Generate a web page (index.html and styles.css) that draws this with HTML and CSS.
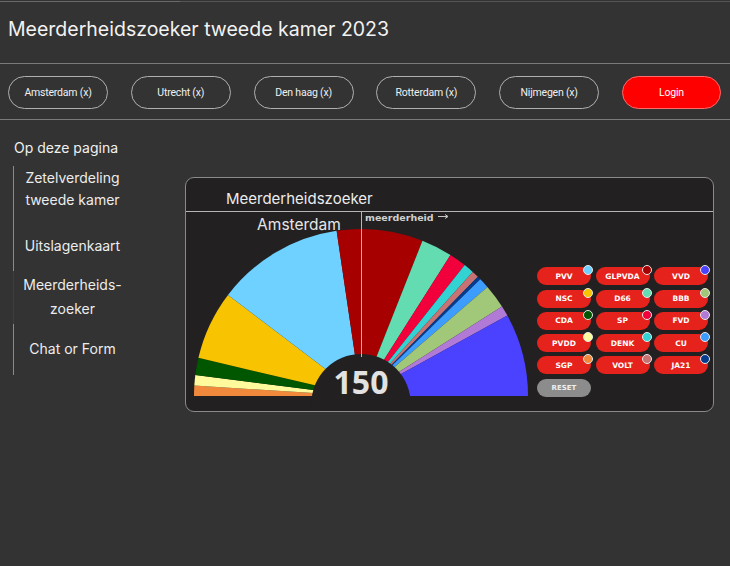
FILE: index.html
```html
<!DOCTYPE html>
<html lang="nl">
<head>
<meta charset="utf-8">
<title>Meerderheidszoeker tweede kamer 2023</title>
<link rel="stylesheet" href="styles.css">
</head>
<body>
<div class="topline"></div>
<header class="site-header">
  <h1 class="site-title">Meerderheidszoeker tweede kamer 2023</h1>
</header>
<nav class="city-bar">
  <button class="pill">Amsterdam (x)</button>
  <button class="pill">Utrecht (x)</button>
  <button class="pill">Den haag (x)</button>
  <button class="pill">Rotterdam (x)</button>
  <button class="pill">Nijmegen (x)</button>
  <button class="pill pill-login">Login</button>
</nav>
<main class="content">
  <aside class="sidebar">
    <div class="toc-title">Op deze pagina</div>
    <ul class="toc">
      <li class="toc-item toc-1">Zetelverdeling<br>tweede kamer</li>
      <li class="toc-item toc-2">Uitslagenkaart</li>
      <li class="toc-item toc-3 active">Meerderheids-<br>zoeker</li>
      <li class="toc-item toc-4">Chat or Form</li>
    </ul>
  </aside>
  <section class="card">
    <div class="card-head">Meerderheidszoeker</div>
    <div class="card-body">
      <svg class="chart" width="345" height="199" viewBox="0 0 345 199">
        <path d="M175 184 L8 184 A167 167 0 0 1 8.33 173.51 Z" fill="#f0893b"/>
        <path d="M175 184 L8.33 173.51 A167 167 0 0 1 9.32 163.07 Z" fill="#fffb9d"/>
        <path d="M175 184 L9.32 163.07 A167 167 0 0 1 12.41 145.87 Z" fill="#005700"/>
        <path d="M175 184 L12.41 145.87 A167 167 0 0 1 41.98 83.03 Z" fill="#f8c300"/>
        <path d="M175 184 L41.98 83.03 A167 167 0 0 1 150.60 18.79 Z" fill="#6ed1ff"/>
        <path d="M175 184 L150.60 18.79 A167 167 0 0 1 236.48 28.73 Z" fill="#a70000"/>
        <path d="M175 184 L236.48 28.73 A167 167 0 0 1 264.48 43.00 Z" fill="#64dcb1"/>
        <path d="M175 184 L264.48 43.00 A167 167 0 0 1 278.73 53.12 Z" fill="#f1003b"/>
        <path d="M175 184 L278.73 53.12 A167 167 0 0 1 286.74 59.90 Z" fill="#34d3d3"/>
        <path d="M175 184 L286.74 59.90 A167 167 0 0 1 291.84 64.68 Z" fill="#c87373"/>
        <path d="M175 184 L291.84 64.68 A167 167 0 0 1 294.32 67.16 Z" fill="#053c8e"/>
        <path d="M175 184 L294.32 67.16 A167 167 0 0 1 301.42 74.88 Z" fill="#3c9dff"/>
        <path d="M175 184 L301.42 74.88 A167 167 0 0 1 316.00 94.52 Z" fill="#a1c878"/>
        <path d="M175 184 L316.00 94.52 A167 167 0 0 1 321.34 103.55 Z" fill="#b07ad6"/>
        <path d="M175 184 L321.34 103.55 A167 167 0 0 1 342 184 Z" fill="#4b42ff"/>
        <circle cx="175" cy="191.6" r="49.6" fill="#222021"/>
        <line x1="175.5" y1="0" x2="175.5" y2="145" stroke="#b8b8b8" stroke-width="1"/>
        <text class="chart-city" x="113" y="18" text-anchor="middle">Amsterdam</text>
        <text class="chart-maj" x="179" y="8.5">meerderheid</text>
        <line x1="252" y1="4.5" x2="261.5" y2="4.5" stroke="#c8c8c8" stroke-width="1"/>
        <path d="M259 2.5 L262 4.5 L259 6.5" fill="none" stroke="#c8c8c8" stroke-width="1"/>
        <text class="chart-total" x="175" y="182" text-anchor="middle">150</text>
      </svg>
      <div class="legend">
        <button class="party">PVV<span class="dot" style="background:#6ed1ff"></span></button>
        <button class="party">GLPVDA<span class="dot" style="background:#a70000"></span></button>
        <button class="party">VVD<span class="dot" style="background:#4b42ff"></span></button>
        <button class="party">NSC<span class="dot" style="background:#f8c300"></span></button>
        <button class="party">D66<span class="dot" style="background:#64dcb1"></span></button>
        <button class="party">BBB<span class="dot" style="background:#a1c878"></span></button>
        <button class="party">CDA<span class="dot" style="background:#005700"></span></button>
        <button class="party">SP<span class="dot" style="background:#f1003b"></span></button>
        <button class="party">FVD<span class="dot" style="background:#b07ad6"></span></button>
        <button class="party">PVDD<span class="dot" style="background:#fffb9d"></span></button>
        <button class="party">DENK<span class="dot" style="background:#34d3d3"></span></button>
        <button class="party">CU<span class="dot" style="background:#3c9dff"></span></button>
        <button class="party">SGP<span class="dot" style="background:#f0893b"></span></button>
        <button class="party">VOLT<span class="dot" style="background:#c87373"></span></button>
        <button class="party">JA21<span class="dot" style="background:#053c8e"></span></button>
        <button class="reset">RESET</button>
      </div>
    </div>
  </section>
</main>
</body>
</html>
```
FILE: styles.css
```css
* { box-sizing: border-box; }
html, body { margin: 0; padding: 0; }
body {
  background: #333333;
  color: #eeeeee;
  font-family: Inter, "Noto Sans", sans-serif;
  width: 730px;
  height: 566px;
  overflow: hidden;
}
.topline {
  margin-top: 1px;
  height: 1px;
  background: linear-gradient(to right, #6a6a6a 0, #6a6a6a 180px, #555555 180px);
}
.site-header {
  height: 62px;
  border-bottom: 1px solid #7a7a7a;
  padding-left: 8px;
}
.site-title {
  margin: 0;
  font-weight: 400;
  font-size: 19.5px;
  line-height: 54px;
  color: #f2f2f2;
}
.city-bar {
  display: flex;
  justify-content: space-between;
  padding: 12px 9px 10px 8px;
  border-bottom: 1px solid #7a7a7a;
}
.pill {
  width: 100px;
  height: 33px;
  border-radius: 17px;
  border: 1px solid #b0b0b0;
  background: transparent;
  color: #f0f0f0;
  font-family: Roboto, sans-serif;
  font-size: 10.5px;
  letter-spacing: -0.2px;
  padding: 0;
}
.pill-login {
  width: 99px;
  background: #ff0000;
  border-color: #ff6a6a;
  color: #ffffff;
}
.content {
  display: flex;
}
.sidebar {
  width: 185px;
  flex: none;
}
.toc-title {
  margin: 18px 0 0 14px;
  font-size: 14px;
  line-height: 20px;
  color: #f0f0f0;
}
.toc {
  list-style: none;
  margin: 8px 0 0 13px;
  padding: 0 0 15px 0;
  width: 118px;
  border-left: 1px solid #8a8a8a;
}
.toc-item {
  text-align: center;
  font-size: 14px;
  line-height: 22px;
  color: #ececec;
}
.toc-1 { padding-top: 1px; }
.toc-2 { margin-top: 24px; }
.toc-3 { margin-top: 14px; }
.toc-4 { margin-top: 14px; }
.toc-item.active {
  margin-left: -1px;
  border-left: 1px solid #8e1c1c;
  padding: 2px 0 3px 0;
  line-height: 24px;
}
.card {
  margin-top: 57px;
  width: 529px;
  height: 235px;
  border: 1px solid #8a8a8a;
  border-radius: 9px;
  background: #222021;
  overflow: hidden;
}
.card-head {
  height: 34px;
  border-bottom: 1px solid #b4b4b4;
  padding: 11px 0 0 40px;
  font-size: 15px;
  line-height: 20px;
  color: #ececec;
}
.card-body {
  display: flex;
  height: 199px;
}
.chart {
  display: block;
  flex: none;
}
.chart-city {
  font-family: Inter, sans-serif;
  font-size: 15.5px;
  fill: #e6e6e6;
}
.chart-maj {
  font-family: "DejaVu Sans", sans-serif;
  font-weight: 700;
  font-size: 9.5px;
  fill: #cfcfcf;
}
.chart-total {
  font-family: "Open Sans", sans-serif;
  font-weight: 700;
  font-size: 32px;
  fill: #e2e2e2;
}
.legend {
  display: grid;
  grid-template-columns: repeat(3, 54px);
  grid-auto-rows: 18px;
  column-gap: 4.5px;
  row-gap: 4.3px;
  padding: 55.3px 0 0 6px;
  align-content: start;
}
.party, .reset {
  position: relative;
  height: 18px;
  border: none;
  border-radius: 9px;
  padding: 0;
  font-family: "DejaVu Sans", sans-serif;
  font-weight: 700;
  font-size: 7.5px;
  color: #ffffff;
}
.party { background: #e5221c; }
.reset {
  background: #8c8c8c;
  color: #eeeeee;
  font-size: 7px;
}
.dot {
  position: absolute;
  top: -2px;
  right: -2px;
  width: 10px;
  height: 10px;
  border-radius: 50%;
  border: 1px solid #e8e8e8;
}
```
